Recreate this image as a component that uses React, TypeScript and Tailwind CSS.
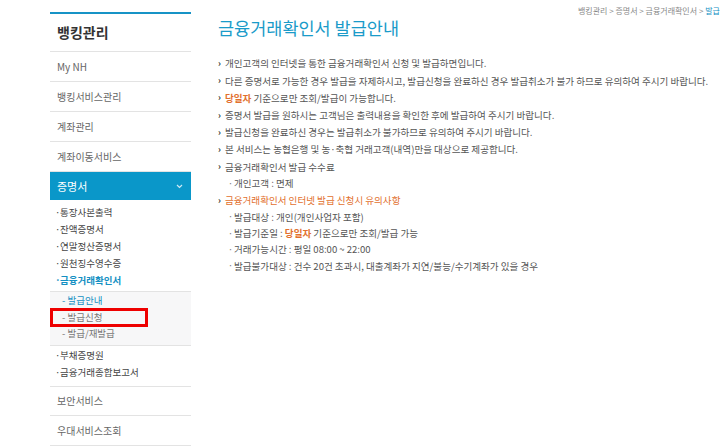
import React from "react";

const font = { fontFamily: '"Noto Sans CJK KR", "Noto Sans", sans-serif' };

function Bullet({ children, mark = "›" }: { children: React.ReactNode; mark?: string }) {
  return (
    <div className="flex items-center h-[17.2px] whitespace-nowrap">
      <span className="w-[7px] text-[9px] text-[#333] font-bold leading-none">{mark}</span>
      <span>{children}</span>
    </div>
  );
}

function Sub({ children }: { children: React.ReactNode }) {
  return (
    <div className="flex items-center h-[16.3px] pl-[10px] whitespace-nowrap">
      <span className="w-[6px] text-[9px] text-[#777] leading-none">·</span>
      <span>{children}</span>
    </div>
  );
}

export default function App() {
  const O = ({ children }: { children: React.ReactNode }) => (
    <span className="text-[#e2702e] font-bold">{children}</span>
  );
  return (
    <div className="w-[720px] h-[447px] overflow-hidden bg-white flex" style={font}>
      <div className="w-[50px] shrink-0" />
      {/* Sidebar */}
      <div className="w-[141px] shrink-0 pt-[12px] text-[#555]">
        <div className="border-t-2 border-[#1793c6] h-[40px] flex items-center pl-[7px] border-b border-b-[#e3e3e3]">
          <span className="text-[14px] font-bold text-[#333]">뱅킹관리</span>
        </div>
        {["My NH", "뱅킹서비스관리", "계좌관리", "계좌이동서비스"].map((t) => (
          <div key={t} className="h-[30px] flex items-center pl-[7px] border-b border-[#e3e3e3] text-[10px] text-[#666]">
            {t}
          </div>
        ))}
        <div className="h-[28px] bg-[#0a97c9] flex items-center justify-between pl-[7px] pr-[8px] text-white text-[11px]">
          <span>증명서</span>
          <svg width="7" height="5" viewBox="0 0 7 5"><path d="M1 1l2.5 2.5L6 1" stroke="#cfeaf5" strokeWidth="1.2" fill="none" /></svg>
        </div>
        <div className="pt-[4px] text-[9.5px] text-[#444]">
          {["통장사본출력", "잔액증명서", "연말정산증명서", "원천징수영수증"].map((t) => (
            <div key={t} className="h-[17px] flex items-center pl-[5px]">
              <span className="w-[5px]">·</span>
              {t}
            </div>
          ))}
          <div className="h-[17px] flex items-center pl-[5px] text-[#1590c3] font-bold">
            <span className="w-[5px]">·</span>
            금융거래확인서
          </div>
          <div className="mt-[2px] bg-[#f7f7f8] border-t border-b border-[#e3e3e3] pb-[3px]">
            <div className="h-[16.5px] flex items-center pl-[12px] text-[#1590c3]">- 발급안내</div>
            <div className="relative h-[16.5px] flex items-center pl-[12px] text-[#777]">
              - 발급신청
              <div className="absolute left-0 top-[-1px] w-[98px] h-[19px] border-[3px] border-[#ee0000]" />
            </div>
            <div className="h-[16.5px] flex items-center pl-[12px] text-[#777]">- 발급/재발급</div>
          </div>
          <div className="pt-[1px] pb-[5px] border-b border-[#e3e3e3]">
            {["부채증명원", "금융거래종합보고서"].map((t) => (
              <div key={t} className="h-[17px] flex items-center pl-[5px]">
                <span className="w-[5px]">·</span>
                {t}
              </div>
            ))}
          </div>
        </div>
        {["보안서비스", "우대서비스조회"].map((t) => (
          <div key={t} className="h-[29.5px] flex items-center pl-[7px] border-b border-[#e3e3e3] text-[10px] text-[#666]">
            {t}
          </div>
        ))}
      </div>
      {/* Main */}
      <div className="flex-1 pl-[27px] min-w-0">
        <div className="pl-[360px] pt-[5px] h-[17px] text-[8px] text-[#888] whitespace-nowrap">
          뱅킹관리 &gt; 증명서 &gt; 금융거래확인서 &gt; <span className="text-[#1590c3]">발급안내</span>
        </div>
        <div className="text-[17.5px] text-[#1a9bc9] leading-none h-[38px] pt-[2px]">금융거래확인서 발급안내</div>
        <div className="text-[9.55px] text-[#555]">
          <Bullet>개인고객의 인터넷을 통한 금융거래확인서 신청 및 발급하면입니다.</Bullet>
          <Bullet>다른 증명서로 가능한 경우 발급을 자제하시고, 발급신청을 완료하신 경우 발급취소가 불가 하므로 유의하여 주시기 바랍니다.</Bullet>
          <Bullet><O>당일자</O> 기준으로만 조회/발급이 가능합니다.</Bullet>
          <Bullet>증명서 발급을 원하시는 고객님은 출력내용을 확인한 후에 발급하여 주시기 바랍니다.</Bullet>
          <Bullet>발급신청을 완료하신 경우는 발급취소가 불가하므로 유의하여 주시기 바랍니다.</Bullet>
          <Bullet>본 서비스는 농협은행 및 농·축협 거래고객(내역)만을 대상으로 제공합니다.</Bullet>
          <Bullet>금융거래확인서 발급 수수료</Bullet>
          <Sub>개인고객 : 면제</Sub>
          <Bullet><span className="text-[#e2702e]">금융거래확인서 인터넷 발급 신청시 유의사항</span></Bullet>
          <Sub>발급대상 : 개인(개인사업자 포함)</Sub>
          <Sub>발급기준일 : <O>당일자</O> 기준으로만 조회/발급 가능</Sub>
          <Sub>거래가능시간 : 평일 08:00 ~ 22:00</Sub>
          <Sub>발급불가대상 : 건수 20건 초과시, 대출계좌가 지연/불능/수기계좌가 있을 경우</Sub>
        </div>
      </div>
    </div>
  );
}
